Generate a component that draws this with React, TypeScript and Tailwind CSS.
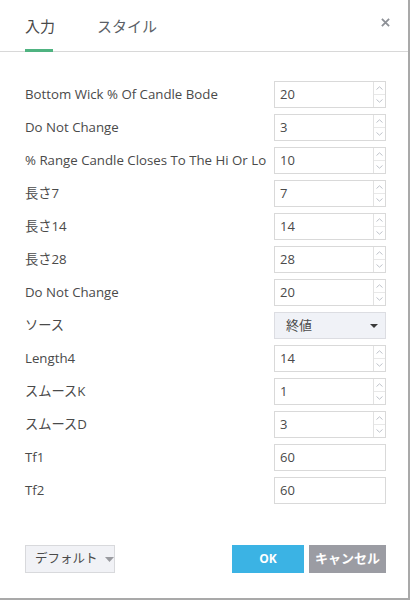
import React from "react";

const rows: { label: string; value: string; type: "spin" | "select" | "text" }[] = [
  { label: "Bottom Wick % Of Candle Bode", value: "20", type: "spin" },
  { label: "Do Not Change", value: "3", type: "spin" },
  { label: "% Range Candle Closes To The Hi Or Lo", value: "10", type: "spin" },
  { label: "長さ7", value: "7", type: "spin" },
  { label: "長さ14", value: "14", type: "spin" },
  { label: "長さ28", value: "28", type: "spin" },
  { label: "Do Not Change", value: "20", type: "spin" },
  { label: "ソース", value: "終値", type: "select" },
  { label: "Length4", value: "14", type: "spin" },
  { label: "スムースK", value: "1", type: "spin" },
  { label: "スムースD", value: "3", type: "spin" },
  { label: "Tf1", value: "60", type: "text" },
  { label: "Tf2", value: "60", type: "text" },
];

const font = { fontFamily: "'Open Sans', 'Noto Sans CJK JP', sans-serif" };

function Spin({ value }: { value: string }) {
  return (
    <div className="flex h-[27px] w-[112px] border border-[#d9d9d9] bg-white">
      <div className="flex flex-1 items-center pl-[5px] text-[13px] text-[#4a4a4a]">{value}</div>
      <div className="flex w-[12px] flex-col border-l border-[#e2e2e2]">
        <div className="flex flex-1 items-center justify-center border-b border-[#e8e8e8]">
          <svg width="7" height="4" viewBox="0 0 7 4"><path d="M0.5 3.5 L3.5 0.8 L6.5 3.5" fill="none" stroke="#b8bcc4" strokeWidth="0.9" /></svg>
        </div>
        <div className="flex flex-1 items-center justify-center">
          <svg width="7" height="4" viewBox="0 0 7 4"><path d="M0.5 0.5 L3.5 3.2 L6.5 0.5" fill="none" stroke="#b8bcc4" strokeWidth="0.9" /></svg>
        </div>
      </div>
    </div>
  );
}

export default function App() {
  return (
    <div className="relative h-[602px] w-[413px] bg-white" style={font}>
      <div className="flex h-[600px] w-[410px] flex-col border-r-2 border-b-2 border-[#a9a9a9] bg-white">
        <div className="flex h-[52px] shrink-0 items-end border-b border-[#d8d8d8] pl-[25px] pr-[18px]">
          <div className="relative flex h-full items-center pt-[1px] text-[15px] text-[#4a4a4a]">
            入力
            <div className="absolute bottom-[-1px] left-0 h-[3px] w-[28px] bg-[#4fb381]" />
          </div>
          <div className="ml-[42px] flex h-full items-center pt-[1px] text-[15px] text-[#5b5f66]">スタイル</div>
          <div className="ml-auto flex h-full items-center pb-[7px]">
            <svg width="9" height="9" viewBox="0 0 10 10"><path d="M1 1 L9 9 M9 1 L1 9" stroke="#8d9096" strokeWidth="2" /></svg>
          </div>
        </div>
        <div className="flex flex-col gap-[6px] pl-[25px] pr-[22px] pt-[29px]">
          {rows.map((r, i) => (
            <div key={i} className="flex h-[27px] items-center justify-between">
              <div className="whitespace-nowrap pt-[1px] text-[13.25px] text-[#4a4a4a]">{r.label}</div>
              {r.type === "spin" && <Spin value={r.value} />}
              {r.type === "text" && (
                <div className="flex h-[27px] w-[112px] items-center border border-[#d9d9d9] pl-[5px] text-[13px] text-[#4a4a4a]">{r.value}</div>
              )}
              {r.type === "select" && (
                <div className="flex h-[27px] w-[112px] items-center justify-between border border-[#dcdde2] bg-[#f0f2f7] pl-[11px] pr-[7px] text-[13px] text-[#4a4a4a]">
                  <span>{r.value}</span>
                  <svg width="8" height="4" viewBox="0 0 8 4"><path d="M0 0 L8 0 L4 4 Z" fill="#3a3a3a" /></svg>
                </div>
              )}
            </div>
          ))}
        </div>
        <div className="mt-auto mb-[25px] flex items-center pl-[25px] pr-[22px]">
          <div className="flex h-[28px] w-[90px] items-center gap-[7px] whitespace-nowrap border border-[#d8d9dc] bg-[#f1f2f6] pl-[9px] text-[12.5px] text-[#4a4a4a]">
            デフォルト
            <svg width="9" height="5" viewBox="0 0 9 5"><path d="M0 0 L9 0 L4.5 5 Z" fill="#9a9ba0" /></svg>
          </div>
          <div className="ml-auto flex h-[28px] w-[72px] items-center justify-center bg-[#3bb3e4] text-[12px] font-bold text-white">OK</div>
          <div className="ml-[5px] flex h-[28px] w-[77px] items-center justify-center whitespace-nowrap bg-[#9b9ca3] text-[13px] font-bold text-white">キャンセル</div>
        </div>
      </div>
    </div>
  );
}
